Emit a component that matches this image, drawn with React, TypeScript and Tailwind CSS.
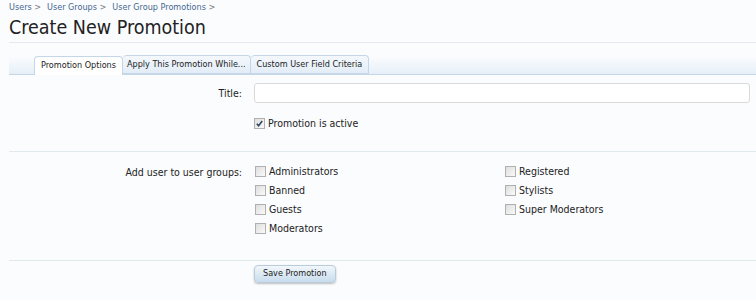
import React from "react";

const font = { fontFamily: '"DejaVu Sans Condensed", "DejaVu Sans", Verdana, sans-serif' };

const groupsLeft = ["Administrators", "Banned", "Guests", "Moderators"];
const groupsRight = ["Registered", "Stylists", "Super Moderators"];

const Box: React.FC<{ checked?: boolean }> = ({ checked }) => (
  <span className="w-[11px] h-[11px] border border-[#b0b0b0] bg-gradient-to-br from-[#dedede] to-[#fafafa] flex items-center justify-center shrink-0">
    {checked && (
      <svg viewBox="0 0 10 10" className="w-[9px] h-[9px]">
        <path d="M2 5.2 L4 7.5 L8 2.2" fill="none" stroke="#2a3f5c" strokeWidth="1.6" />
      </svg>
    )}
  </span>
);

const Check: React.FC<{ label: string; checked?: boolean }> = ({ label, checked }) => (
  <label className="flex items-center gap-[3px] h-[19px] text-[10.5px] text-[#222]">
    <Box checked={checked} />
    <span>{label}</span>
  </label>
);

const App: React.FC = () => {
  return (
    <div className="w-[756px] h-[300px] bg-[#fbfcfe] overflow-hidden pl-[9px] font-stretch-condensed" style={font}>
      {/* Breadcrumb */}
      <div className="h-[14px] pt-[1px] text-[9px] text-[#46688f] flex gap-[6px]">
        <span>Users <span className="text-[#777]">&gt;</span></span>
        <span>User Groups <span className="text-[#777]">&gt;</span></span>
        <span>User Group Promotions <span className="text-[#777]">&gt;</span></span>
      </div>

      {/* Title */}
      <h1 className="text-[19.5px] leading-[27px] text-[#222] h-[29px] border-b border-[#e3eaf1]">
        Create New Promotion
      </h1>

      {/* Tabs */}
      <div className="mt-[13px] h-[19px] flex items-end pl-[25px] border-b border-[#c5d6e6] bg-gradient-to-b from-[#fbfcfe] to-[#e6eff8]">
        <div className="h-[19px] px-[6px] flex items-center text-[9px] text-[#222] bg-white border border-b-0 border-[#c5d6e6] rounded-t-[4px] -mb-px pb-px">
          Promotion Options
        </div>
        <div className="h-[19px] px-[4px] flex items-center text-[9px] text-[#222] bg-gradient-to-b from-[#f4f8fc] to-[#e3edf7] border border-l-0 border-[#c5d6e6] rounded-t-[4px]">
          Apply This Promotion While...
        </div>
        <div className="h-[19px] px-[6px] flex items-center text-[9px] text-[#222] bg-gradient-to-b from-[#f4f8fc] to-[#e3edf7] border border-l-0 border-[#c5d6e6] rounded-t-[4px]">
          Custom User Field Criteria
        </div>
      </div>

      {/* Title row */}
      <div className="flex pt-[8px]">
        <div className="w-[233px] text-right text-[10.5px] text-[#222] pt-[3px]">Title:</div>
        <div className="ml-[12px] flex-1 pr-[6px]">
          <div className="h-[20px] bg-white border border-[#dadada] rounded-[3px]" />
          <div className="mt-[11px]">
            <Check label="Promotion is active" checked />
          </div>
        </div>
      </div>

      <div className="mt-[18px] border-t border-[#e0eaee]" />

      {/* User groups */}
      <div className="flex pt-[10px]">
        <div className="w-[233px] text-right text-[10.5px] text-[#222] pt-[3px]">Add user to user groups:</div>
        <div className="ml-[13px] flex">
          <div className="w-[250px]">
            {groupsLeft.map((g) => (
              <Check key={g} label={g} />
            ))}
          </div>
          <div>
            {groupsRight.map((g) => (
              <Check key={g} label={g} />
            ))}
          </div>
        </div>
      </div>

      <div className="mt-[22px] border-t border-[#e0eaee]" />

      {/* Submit */}
      <div className="flex pl-[245px] pt-[4px]">
        <button className="h-[18px] px-[8px] text-[9px] text-[#222] rounded-[4px] border border-[#b9ccdc] bg-gradient-to-b from-[#f2f7fb] to-[#c8dcec] shadow-[0_1px_2px_rgba(0,0,0,0.25)]">
          Save Promotion
        </button>
      </div>
    </div>
  );
};

export default App;
